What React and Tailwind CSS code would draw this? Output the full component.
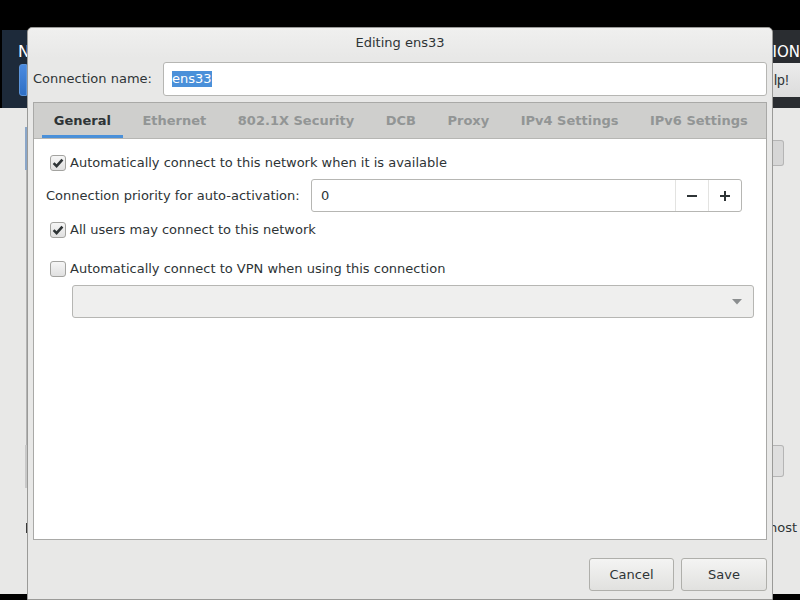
import React from "react";

const font = { fontFamily: '"DejaVu Sans", "Noto Sans", sans-serif' };

function Check({ checked }) {
  return (
    <div className="w-[16px] h-[16px] rounded-[3px] border border-[#a3a3a0] bg-gradient-to-b from-[#f6f6f6] to-[#e0e0e0] flex items-center justify-center shrink-0">
      {checked && (
        <svg width="12" height="12" viewBox="0 0 12 12">
          <path d="M1.6 6.2 L4.6 9.2 L10.4 2.6" fill="none" stroke="#2e3436" strokeWidth="2.6" strokeLinecap="butt" strokeLinejoin="miter" />
        </svg>
      )}
    </div>
  );
}

function Tab({ label, active }) {
  return (
    <div className={"mx-[4px] px-[11.75px] h-full flex items-center shrink-0 whitespace-nowrap font-bold border-b-[3px] " + (active ? "border-[#4a90d9] text-[#2e3436]" : "border-transparent text-[#929595]")}>
      <span className="pt-[3px]">{label}</span>
    </div>
  );
}

function Button({ label, w }) {
  return (
    <div className={"h-[33px] rounded-[3px] border border-[#afafab] bg-gradient-to-b from-[#f4f4f3] to-[#e1e1df] flex items-center justify-center text-[#2e3436] " + w}>
      {label}
    </div>
  );
}

export default function App() {
  return (
    <div className="relative w-[800px] h-[600px] bg-black overflow-hidden text-[13px] text-[#2e3436]" style={font}>
      {/* background application */}
      <div className="flex flex-col h-full">
        <div className="h-[30px] bg-black shrink-0" />
        <div className="h-[78px] flex shrink-0">
          <div className="w-[2px] bg-black" />
          <div className="w-[25px] bg-[#1d2a3a] flex flex-col">
            <div className="h-[14px]" />
            <div className="pl-[16px] text-white text-[16px] leading-[16px]">N</div>
            <div className="h-[4px]" />
            <div className="ml-[17px] h-[32px] rounded-l-[3px] border border-[#5b94da] bg-gradient-to-b from-[#4a8ae0] to-[#2f6fc4]" />
          </div>
          <div className="flex-1" />
          <div className="w-[27px] bg-[#2a2d31] flex flex-col">
            <div className="h-[14px]" />
            <div className="h-[16px] flex justify-end overflow-hidden">
              <span className="text-white text-[15px] leading-[16px] whitespace-nowrap">TION</span>
            </div>
            <div className="h-[3px]" />
            <div className="h-[34px] bg-gradient-to-b from-[#ececec] to-[#dcdcdc] flex items-center text-[#2e3436]" style={{ fontFamily: '"Liberation Sans", sans-serif', fontSize: 14 }}>
              <span className="pl-[1px]">lp!</span>
            </div>
          </div>
        </div>
        <div className="flex-1 flex bg-[#e8e8e7]">
          <div className="w-[27px] flex flex-col">
            <div className="h-[19px]" />
            <div className="ml-[25px] w-[2px] h-[43px] bg-[#8aa6c8]" />
            <div className="ml-[26px] w-[1px] h-[275px] bg-[#b4b4b4]" />
            <div className="ml-[25px] w-[2px] h-[43px] bg-[#c8c8c8]" />
            <div className="h-[35px]" />
            <div className="ml-[26px] w-[2px] h-[10px] bg-[#3a3a3a]" />
          </div>
          <div className="flex-1" />
          <div className="w-[27px] flex flex-col">
            <div className="h-[32px]" />
            <div className="w-[11px] h-[26px] rounded-r-[3px] border border-l-0 border-[#b5b5b5] bg-[#d6d6d6]" />
            <div className="h-[279px]" />
            <div className="w-[11px] h-[32px] rounded-r-[3px] border border-l-0 border-[#b5b5b5] bg-[#dedede]" />
            <div className="mt-[41px] h-[20px] flex items-center text-[#2e3436] whitespace-nowrap overflow-hidden">
              <span className="-ml-[4px]">host</span>
            </div>
          </div>
        </div>
        <div className="h-[6px] bg-black shrink-0" />
      </div>

      {/* dialog */}
      <div className="absolute left-[27px] top-[27px] w-[746px] h-[573px] border border-[#9a9a98] rounded-t-[5px] bg-[#e8e8e7] flex flex-col">
        <div className="h-[30px] flex items-center justify-center rounded-t-[5px] bg-gradient-to-b from-[#f0f0ef] to-[#e8e8e7]">
          <span>Editing ens33</span>
        </div>
        <div className="mt-[4px] h-[34px] flex items-center px-[5px]">
          <div className="w-[130px] shrink-0">Connection name:</div>
          <div className="flex-1 h-full bg-white border border-[#b6b6b3] rounded-[3px] flex items-center pl-[8px]">
            <span className="bg-[#4a90d9] text-white leading-[16px] h-[16px]">ens33</span>
          </div>
        </div>
        <div className="mt-[6px] mx-[5px] h-[438px] border border-[#a9a9a7] flex flex-col">
          <div className="h-[36px] bg-[#cfcfcd] flex pl-[4px] border-b border-[#b6b6b3] shrink-0">
            <Tab label="General" active />
            <Tab label="Ethernet" />
            <Tab label="802.1X Security" />
            <Tab label="DCB" />
            <Tab label="Proxy" />
            <Tab label="IPv4 Settings" />
            <Tab label="IPv6 Settings" />
          </div>
          <div className="flex-1 bg-white flex flex-col pl-[12px]">
            <div className="mt-[12px] h-[24px] flex items-center ml-[4px] gap-[4px]">
              <Check checked />
              <span>Automatically connect to this network when it is available</span>
            </div>
            <div className="mt-[4px] h-[33px] flex items-center">
              <div className="w-[265px] shrink-0">Connection priority for auto-activation:</div>
              <div className="w-[431px] h-full bg-white border border-[#b6b6b3] rounded-[3px] flex">
                <div className="flex-1 flex items-center pl-[9px]">0</div>
                <div className="w-[33px] border-l border-[#e3e3e1] flex items-center justify-center">
                  <svg width="12" height="12" viewBox="0 0 12 12">
                    <rect x="1" y="5" width="10" height="2" fill="#2e3436" />
                  </svg>
                </div>
                <div className="w-[33px] border-l border-[#e3e3e1] flex items-center justify-center">
                  <svg width="12" height="12" viewBox="0 0 12 12">
                    <rect x="1" y="5" width="10" height="2" fill="#2e3436" />
                    <rect x="5" y="1" width="2" height="10" fill="#2e3436" />
                  </svg>
                </div>
              </div>
            </div>
            <div className="mt-[6px] h-[24px] flex items-center ml-[4px] gap-[4px]">
              <Check checked />
              <span>All users may connect to this network</span>
            </div>
            <div className="mt-[15px] h-[24px] flex items-center ml-[4px] gap-[4px]">
              <Check />
              <span>Automatically connect to VPN when using this connection</span>
            </div>
            <div className="mt-[4px] ml-[26px] w-[682px] h-[33px] bg-[#efefee] border border-[#b6b6b3] rounded-[3px] flex items-center justify-end pr-[11px]">
              <svg width="10" height="6" viewBox="0 0 10 6">
                <path d="M0 0 L10 0 L5 5.5 Z" fill="#8b8e8f" />
              </svg>
            </div>
          </div>
        </div>
        <div className="pt-[18px] flex justify-end gap-[7px] pr-[5px]">
          <Button label="Cancel" w="w-[85px]" />
          <Button label="Save" w="w-[86px]" />
        </div>
      </div>
    </div>
  );
}
